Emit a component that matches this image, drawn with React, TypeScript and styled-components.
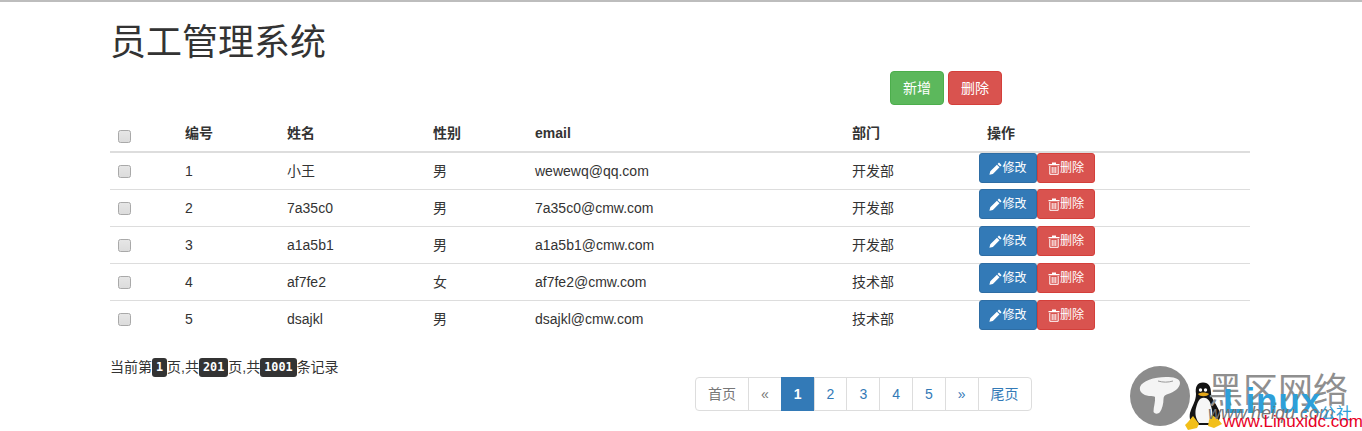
import React from 'react';
import styled, { createGlobalStyle } from 'styled-components';

const sans = `"Liberation Sans", "Noto Sans CJK SC", sans-serif`

const GlobalStyle = createGlobalStyle`
    html, body {
        margin: 0;
        padding: 0;
        background: #fff;
        height: 431px;
        overflow: hidden;
    }
    body {
        font-family: ${sans};
        font-size: 14px;
        line-height: 20px;
        color: #333;
    }
`

const rows = [
    { id: 1, name: "小王", gender: "男", email: "wewewq@qq.com", dept: "开发部" },
    { id: 2, name: "7a35c0", gender: "男", email: "7a35c0@cmw.com", dept: "开发部" },
    { id: 3, name: "a1a5b1", gender: "男", email: "a1a5b1@cmw.com", dept: "开发部" },
    { id: 4, name: "af7fe2", gender: "女", email: "af7fe2@cmw.com", dept: "技术部" },
    { id: 5, name: "dsajkl", gender: "男", email: "dsajkl@cmw.com", dept: "技术部" },
]

const PencilIcon = () => (
    <svg width="13" height="13" viewBox="0 0 13 13" aria-hidden="true">
        <path d="M10 0.6 L12.6 3.2 L11.2 4.6 L8.6 2 Z M7.9 2.7 L10.5 5.3 L3.9 11.9 L0.4 12.8 L1.3 9.3 Z" fill="#fff" />
    </svg>
)

const TrashIcon = () => (
    <svg width="12" height="13" viewBox="0 0 12 13" aria-hidden="true">
        <path d="M4 0.5 H8 V2 H11.5 V3.2 H0.5 V2 H4 Z" fill="#fff" />
        <path d="M1.8 4 V12.3 H10.2 V4 M4.2 5 V11 M6 5 V11 M7.8 5 V11" fill="none" stroke="#fff" strokeWidth="1" />
    </svg>
)

function App() {
    return (
        <Page>
            <GlobalStyle />
            <Title>员工管理系统</Title>
            <Toolbar>
                <TopButton $variant="success">新增</TopButton>
                <TopButton $variant="danger">删除</TopButton>
            </Toolbar>
            <Table>
                <colgroup>
                    <col width="67" />
                    <col width="102" />
                    <col width="146" />
                    <col width="102" />
                    <col width="317" />
                    <col width="127" />
                    <col />
                </colgroup>
                <thead>
                    <tr>
                        <Th><Check /></Th>
                        <Th>编号</Th>
                        <Th>姓名</Th>
                        <Th>性别</Th>
                        <Th>email</Th>
                        <Th>部门</Th>
                        <ActionTh>操作</ActionTh>
                    </tr>
                </thead>
                <tbody>
                    {rows.map(r => (
                        <tr key={r.id}>
                            <Td><Check /></Td>
                            <Td>{r.id}</Td>
                            <Td>{r.name}</Td>
                            <Td>{r.gender}</Td>
                            <Td>{r.email}</Td>
                            <Td>{r.dept}</Td>
                            <ActionTd>
                                <RowButton $variant="primary"><PencilIcon />修改</RowButton>
                                <RowButton $variant="danger"><TrashIcon />删除</RowButton>
                            </ActionTd>
                        </tr>
                    ))}
                </tbody>
            </Table>
            <Footer>
                <PageInfo>
                    当前第<Code>1</Code>页,共<Code>201</Code>页,共<Code>1001</Code>条记录
                </PageInfo>
                <Pagination>
                    <PageLink $muted>首页</PageLink>
                    <PageLink $muted>«</PageLink>
                    <PageLink $active>1</PageLink>
                    <PageLink>2</PageLink>
                    <PageLink>3</PageLink>
                    <PageLink>4</PageLink>
                    <PageLink>5</PageLink>
                    <PageLink>»</PageLink>
                    <PageLink>尾页</PageLink>
                </Pagination>
            </Footer>
            <Watermark>
                <LogoMark width="100" height="65" viewBox="0 0 100 65" aria-hidden="true">
                    <circle cx="30" cy="30" r="30" fill="#8c8c8c" />
                    <path d="M10 21 C12 15 24 11 36 11 C43 11 50 12 50 17 C50 22 44 26 38 28 C35 29 33.5 30 33.5 33 C33.5 38 32 43 30 46 C28 48.5 24 48 23.5 45.5 C23.5 41 25.5 36 25 31 C24.5 30 22 30 19 30 C13 29 9 26 10 21 Z" fill="#f4f4f4" />
                    <path d="M28 15 C33 16.5 38 16.5 43 15" fill="none" stroke="#9a9a9a" strokeWidth="1" />
                    <path d="M73 16.5 C79 16.5 81 21 81 27 C81 33 87 38 90 47 C91 53 88 57 82 59 L66 59 C60 57 59 52 60 47 C62 40 66 35 66 28 C65 21 67 16.5 73 16.5 Z" fill="#141414" />
                    <path d="M70 33 C75 30 80 33 81 40 C83 46 83 52 79 57 L69 57 C65 52 65 46 66 42 C67 38 68 35 70 33 Z" fill="#f6f6f6" />
                    <circle cx="70.5" cy="24" r="1.7" fill="#fff" />
                    <circle cx="75.5" cy="24" r="1.7" fill="#fff" />
                    <path d="M68 28 C71 26 76 26 79 28 C77 31 70 31 68 28 Z" fill="#e5a81a" />
                    <path d="M63 50 L69 58 L67 62 L58 64 L55 59 L58 56 Z M82 49 L88 53 L92 58 L84 62 L78 60 L79 54 Z" fill="#f2bf1a" />
                </LogoMark>
                <BrandName>黑区网络</BrandName>
                <LinuxText>Linux</LinuxText>
                <HtText>www.heiqu.com</HtText>
                <CommuneText>公社</CommuneText>
                <SiteText>www.Linuxidc.com</SiteText>
            </Watermark>
        </Page>
    );
}

const Page = styled.div`
    position: relative;
    height: 431px;
    box-sizing: border-box;
    border-top: 2px solid #bdbdbd;
    padding: 0 112px 0 110px;
    overflow: hidden;
`

const Title = styled.h1`
    margin: 21px 0 8px;
    font-size: 36px;
    line-height: 40px;
    font-weight: 400;
    color: #333;
    font-family: ${sans};
`

const Toolbar = styled.div`
    display: flex;
    gap: 4px;
    padding-left: 780px;
    height: 34px;
    margin-bottom: 10px;
`

const variants = {
    success: { bg: "#5cb85c", border: "#4cae4c" },
    danger: { bg: "#d9534f", border: "#d43f3a" },
    primary: { bg: "#337ab7", border: "#2e6da4" },
}

type Variant = keyof typeof variants

const TopButton = styled.button<{ $variant: Variant }>`
    width: 54px;
    height: 34px;
    padding: 0;
    font: 14px/20px ${sans};
    color: #fff;
    background: ${p => variants[p.$variant].bg};
    border: 1px solid ${p => variants[p.$variant].border};
    border-radius: 4px;
`

const Table = styled.table`
    width: 1140px;
    table-layout: fixed;
    border-collapse: collapse;
    border-spacing: 0;
`

const Th = styled.th`
    height: 36px;
    padding: 8px;
    box-sizing: border-box;
    text-align: left;
    font-weight: 700;
    color: #333;
    border-bottom: 2px solid #ddd;
    vertical-align: bottom;
`

const ActionTh = styled(Th)`
    padding-left: 16px;
`

const Td = styled.td`
    height: 37px;
    padding: 8px;
    box-sizing: border-box;
    border-bottom: 1px solid #ddd;
    vertical-align: middle;
    &:first-child {
        padding-top: 6px;
        padding-bottom: 6px;
    }
    tr:last-child > & {
        border-bottom: none;
    }
`

const ActionTd = styled(Td)`
    padding: 0 8px 6px;
    vertical-align: top;
    white-space: nowrap;
    font-size: 0;
    tr:not(:first-child) > & button {
        margin-top: -1px;
    }
`

const Check = styled.span`
    display: block;
    width: 13px;
    height: 13px;
    box-sizing: border-box;
    background: linear-gradient(#e6e6e6, #dcdcdc);
    border: 1px solid #a9a9a9;
    border-radius: 2.5px;
`

const RowButton = styled.button<{ $variant: Variant }>`
    display: inline-flex;
    align-items: center;
    justify-content: center;
    width: 58px;
    height: 30px;
    padding: 0;
    font: 12px/18px ${sans};
    color: #fff;
    background: ${p => variants[p.$variant].bg};
    border: 1px solid ${p => variants[p.$variant].border};
    border-radius: 3px;
    vertical-align: top;
`

const Footer = styled.div`
    margin-top: 18px;
`

const PageInfo = styled.div`
    height: 22px;
    line-height: 22px;
    white-space: nowrap;
`

const Code = styled.code`
    display: inline-block;
    padding: 2px 4px;
    height: 19px;
    box-sizing: border-box;
    line-height: 15px;
    vertical-align: 1px;
    font-family: "DejaVu Sans Mono", monospace;
    font-size: 11.8px;
    font-weight: 700;
    color: #fff;
    background: #333;
    border-radius: 3px;
`

const Pagination = styled.div`
    display: inline-flex;
    margin: -1px 0 0 585px;
    vertical-align: top;
`

const PageLink = styled.a<{ $active?: boolean; $muted?: boolean }>`
    display: block;
    padding: 6px 12px;
    margin-left: -1px;
    line-height: 20px;
    color: ${p => p.$active ? "#fff" : p.$muted ? "#777" : "#337ab7"};
    font-weight: ${p => p.$active ? 700 : 400};
    background: ${p => p.$active ? "#337ab7" : "#fff"};
    border: 1px solid ${p => p.$active ? "#337ab7" : "#ddd"};
    &:first-child {
        margin-left: 0;
        border-radius: 4px 0 0 4px;
    }
    &:last-child {
        border-radius: 0 4px 4px 0;
    }
`

const Watermark = styled.div`
    position: absolute;
    left: 1130px;
    top: 364px;
    width: 232px;
    height: 65px;
`

const LogoMark = styled.svg`
    display: block;
`

const BrandName = styled.span`
    position: absolute;
    left: 78px;
    top: 0;
    font: 35px/44px "Noto Sans CJK SC", sans-serif;
    color: #8f8f8f;
    white-space: nowrap;
`

const LinuxText = styled.span`
    position: absolute;
    left: 93px;
    top: 15px;
    font: 700 35px/40px ${sans};
    color: #2e9fd8;
    letter-spacing: 1px;
`

const CommuneText = styled.span`
    position: absolute;
    left: 190px;
    top: 36px;
    font: 16px/20px "Noto Sans CJK SC", sans-serif;
    color: #2e9fd8;
    white-space: nowrap;
`

const HtText = styled.span`
    position: absolute;
    left: 78px;
    top: 37px;
    font: italic 18px/20px ${sans};
    color: #777;
    white-space: nowrap;
`

const SiteText = styled.span`
    position: absolute;
    left: 93px;
    top: 46px;
    font: 17px/20px ${sans};
    color: #e8001f;
    white-space: nowrap;
`

export default App;
